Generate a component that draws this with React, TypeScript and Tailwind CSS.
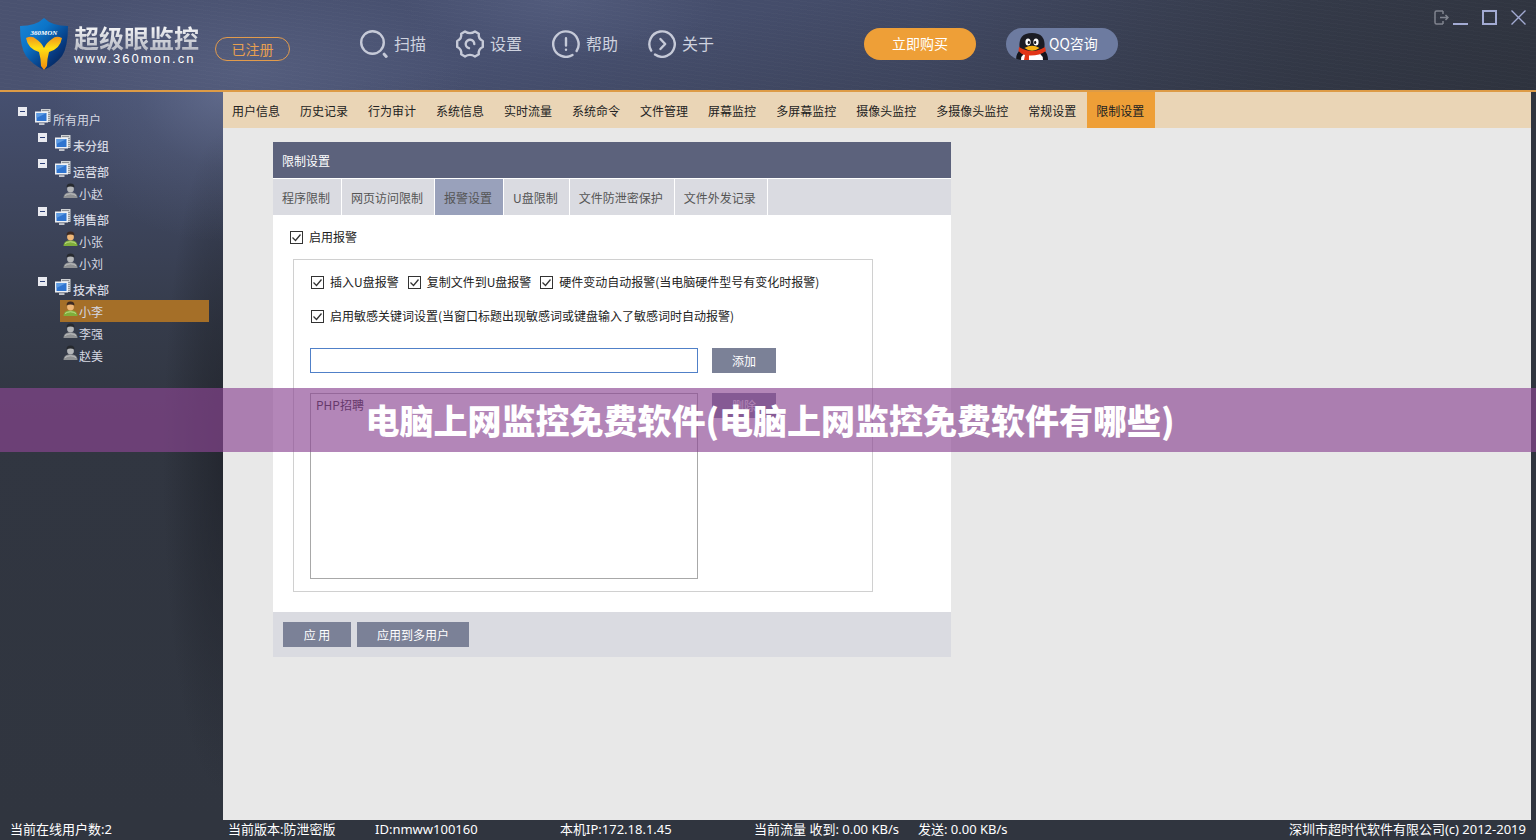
import { useState } from "react";
import type { ReactNode } from "react";
import { clsx } from "clsx";

type TreeUser = { name: string; online?: boolean };
type TreeGroup = { name: string; users: TreeUser[] };

const groups: TreeGroup[] = [
  { name: "未分组", users: [] },
  { name: "运营部", users: [{ name: "小赵" }] },
  { name: "销售部", users: [{ name: "小张", online: true }, { name: "小刘" }] },
  {
    name: "技术部",
    users: [{ name: "小李", online: true }, { name: "李强" }, { name: "赵美" }],
  },
];

const mainTabs = [
  "用户信息",
  "历史记录",
  "行为审计",
  "系统信息",
  "实时流量",
  "系统命令",
  "文件管理",
  "屏幕监控",
  "多屏幕监控",
  "摄像头监控",
  "多摄像头监控",
  "常规设置",
  "限制设置",
];

const limitTabs = [
  "程序限制",
  "网页访问限制",
  "报警设置",
  "U盘限制",
  "文件防泄密保护",
  "文件外发记录",
];

function ShieldLogo() {
  return (
    <svg viewBox="0 0 50 54" className="h-[54px] w-[50px] shrink-0" aria-hidden="true">
      <defs>
        <linearGradient id="shieldBlue" x1="0" y1="0" x2="1" y2="1">
          <stop offset="0" stopColor="#1b86d6" />
          <stop offset="0.35" stopColor="#0b74c8" />
          <stop offset="0.7" stopColor="#07397f" />
          <stop offset="1" stopColor="#05183f" />
        </linearGradient>
        <linearGradient id="shieldGold" x1="0" y1="0" x2="0" y2="1">
          <stop offset="0" stopColor="#f0951c" />
          <stop offset="0.35" stopColor="#ffdf12" />
          <stop offset="1" stopColor="#f08a10" />
        </linearGradient>
      </defs>
      <path
        d="M25 1 Q33 9 49 9 Q49 30 43 39 Q36 48 25 53 Q14 48 7 39 Q1 30 1 9 Q17 9 25 1Z"
        fill="url(#shieldBlue)"
      />
      <path
        d="M7 21 Q9 32 20 35 Q22 42 22 49 L25 53 L28 49 Q28 42 30 35 Q41 32 43 21 Q37 18 33 22 Q28 25 25 31 Q22 25 17 22 Q13 18 7 21Z"
        fill="url(#shieldGold)"
      />
      <text
        x="25"
        y="18"
        textAnchor="middle"
        fontFamily="Liberation Serif, serif"
        fontSize="7"
        fontStyle="italic"
        fontWeight="700"
        fill="#fff"
      >
        360MON
      </text>
    </svg>
  );
}

function NavIcon({ children }: { children: ReactNode }) {
  return (
    <svg
      viewBox="0 0 28 28"
      className="size-7"
      fill="none"
      stroke="#c6cad8"
      strokeWidth="2.4"
      strokeLinecap="round"
      strokeLinejoin="round"
      aria-hidden="true"
    >
      {children}
    </svg>
  );
}

const navItems = [
  {
    label: "扫描",
    icon: (
      <NavIcon>
        <circle cx="12.5" cy="12.5" r="11.3" />
        <path d="M24.2 24.2l2 2.2" strokeWidth="3" />
      </NavIcon>
    ),
  },
  {
    label: "设置",
    icon: (
      <NavIcon>
        <path d="M9 1.5 Q14 4.800 19 1.5 L22.800 3.800 Q22 8.800 26.800 11 V17 Q22 19.200 22.800 24.200 L19 26.500 Q14 23.200 9 26.500 L5.200 24.200 Q6 19.200 1.200 17 V11 Q6 8.800 5.200 3.800Z" />
        <path d="M13 18.200 A4.300 4.300 0 1 1 18.300 14" />
      </NavIcon>
    ),
  },
  {
    label: "帮助",
    icon: (
      <NavIcon>
        <path d="M20.5 25 A12.7 12.7 0 1 1 24.6 21" />
        <path d="M14 8.2v7.3M14 19.6v.2" />
      </NavIcon>
    ),
  },
  {
    label: "关于",
    icon: (
      <NavIcon>
        <path d="M3.2 20.6 A12.7 12.7 0 1 1 7 24.6" />
        <path d="M12.4 9l4.8 5-4.8 5" />
      </NavIcon>
    ),
  },
];

function PenguinIcon() {
  return (
    <svg viewBox="0 0 34 27" className="h-[27px] w-[34px]" aria-hidden="true">
      <path d="M1 27 Q1 20 6 16 L28 16 Q33 20 33 27Z" fill="#15161d" />
      <path d="M6 27 Q6 19 17 19 Q28 19 28 27Z" fill="#fff" />
      <path d="M4.5 15 Q3 0 17 0 Q31 0 29.5 15 Q24 20 17 20 Q10 20 4.5 15Z" fill="#1b1c24" />
      <path d="M4 14 Q17 22 30 14 L31 18 Q24 23 14 22.500 V27 H9 L10 22 Q6 21 3.500 18Z" fill="#e23417" />
      <ellipse cx="13" cy="9" rx="2.600" ry="3.600" fill="#fff" />
      <ellipse cx="21" cy="9" rx="2.600" ry="3.600" fill="#fff" />
      <ellipse cx="13.800" cy="9.400" rx="1.100" ry="1.600" fill="#15161d" />
      <ellipse cx="20.200" cy="9.400" rx="1.100" ry="1.600" fill="#15161d" />
      <path d="M9.500 15 Q17 10.500 24.500 15 Q17 20.500 9.500 15Z" fill="#f8b416" />
    </svg>
  );
}

function CollapseIcon() {
  return (
    <svg viewBox="0 0 9 9" className="size-[9px]" aria-hidden="true">
      <path d="M0 0h9v9H0z" fill="#e9eaf0" />
      <path d="M2 4h5v1H2z" fill="#2c3f77" />
    </svg>
  );
}

function ComputerIcon() {
  return (
    <svg viewBox="0 0 16 16" className="size-4 shrink-0" aria-hidden="true">
      <path d="M6 0h9.500v13H6z" fill="#cfd2d4" />
      <path d="M7 1.500h7" stroke="#8d9196" />
      <path d="M14 3v9" stroke="#5d6269" strokeDasharray="1 1" />
      <path d="M0 2.500h13v11H0z" fill="#eef1f5" />
      <path d="M1.500 4h10v8h-10z" fill="#2f74cf" />
      <path d="M1.500 4h10L1.500 9z" fill="#5c9ae2" />
      <path d="M4 14.300h5.500v1.500H4z" fill="#e3e5e8" />
    </svg>
  );
}

function UserIcon({ online = false }: { online?: boolean }) {
  return (
    <svg viewBox="0 0 15 16" className="h-4 w-[15px] shrink-0" aria-hidden="true">
      <path d="M0.500 15 Q0.500 10.500 5 9.500 h5 Q14.500 10.500 14.500 15Z" fill={online ? "#7fae3a" : "#8f9193"} />
      <path d="M2 12.500 Q7.500 9 13 12.500" stroke={online ? "#c3dd8c" : "#c2c3c4"} fill="none" />
      <circle cx="7.500" cy="6" r="3.400" fill={online ? "#f0b878" : "#b4b6b8"} />
      <path d="M3.600 4.500 Q3.300 0.500 7.500 0.500 Q11.700 0.500 11.400 4.500 Q7.500 2.500 3.600 4.500Z" fill={online ? "#3d2a22" : "#26292e"} />
    </svg>
  );
}

function WindowControls() {
  return (
    <div className="flex items-start gap-[14px] pt-[10px] pr-[10px] text-[#a3abd3]">
      <div className="flex gap-1">
        <button type="button" aria-label="退出登录" className="text-[#80848f]">
          <svg viewBox="0 0 15 15" className="size-[15px]" fill="none" stroke="currentColor" strokeWidth="1.500">
            <path d="M9 1H2.500Q1 1 1 2.500v10Q1 14 2.500 14H9M9 1v3M9 14v-3M6 7.500H14M11.500 5l2.500 2.500-2.500 2.500" />
          </svg>
        </button>
        <button type="button" aria-label="最小化">
          <svg viewBox="0 0 15 15" className="size-[15px]">
            <path d="M0 13h15v2H0z" fill="currentColor" />
          </svg>
        </button>
      </div>
      <button type="button" aria-label="最大化">
        <svg viewBox="0 0 15 15" className="size-[15px]" fill="none" stroke="currentColor" strokeWidth="2">
          <path d="M1 1h13v13H1z" />
        </svg>
      </button>
      <button type="button" aria-label="关闭">
        <svg viewBox="0 0 15 15" className="size-[15px]" fill="none" stroke="currentColor" strokeWidth="1.400">
          <path d="M0.500 0.500l14 14M14.500 0.500l-14 14" />
        </svg>
      </button>
    </div>
  );
}

function Header() {
  return (
    <header className="flex h-[92px] shrink-0 justify-between border-b-2 border-[#dd9b46] bg-[repeating-linear-gradient(8deg,transparent_0_3px,rgba(255,255,255,0.015)_3px_4px),radial-gradient(ellipse_220px_90px_at_250px_70px,rgba(120,130,165,0.25),transparent),radial-gradient(ellipse_160px_60px_at_560px_0px,rgba(120,130,165,0.22),transparent),linear-gradient(170deg,transparent_40%,rgba(40,44,54,0.45)),linear-gradient(90deg,#4a5270,#475070_35%,#434b67_60%,#373d4d_85%,#333844)]">
      <div className="flex items-start">
        <div className="flex pt-[17px] pl-[19px]">
          <ShieldLogo />
          <div className="w-[146px] pt-[6px] pl-[5px]">
            <p className="bg-linear-to-b from-white to-[#b4b7c2] bg-clip-text text-[25px] leading-7 font-bold text-transparent">
              超级眼监控
            </p>
            <p className="font-['Liberation_Sans',sans-serif] text-[13px] leading-4 tracking-[2px] text-white">
              www.360mon.cn
            </p>
          </div>
        </div>
        <span className="mt-[37px] flex h-6 w-[75px] items-center justify-center rounded-full border border-[#e29b4c] text-sm text-[#e8a050]">
          已注册
        </span>
        <nav className="flex gap-[30px] pt-[30px] pl-[70px]">
          {navItems.map((item) => (
            <button
              key={item.label}
              type="button"
              className="flex h-7 items-start gap-[6px] text-base leading-[26px] text-[#ced2df]"
            >
              {item.icon}
              {item.label}
            </button>
          ))}
        </nav>
        <div className="flex gap-[30px] pt-7 pl-[150px] text-sm text-white">
          <button type="button" className="h-8 w-28 rounded-full bg-[#ee9f37] pb-[2px]">
            立即购买
          </button>
          <button
            type="button"
            className="flex h-8 w-28 items-start overflow-hidden rounded-full bg-[#6d7ba0] pl-[9px] leading-[30px]"
          >
            <span className="self-end">
              <PenguinIcon />
            </span>
            QQ咨询
          </button>
        </div>
      </div>
      <WindowControls />
    </header>
  );
}

function Sidebar() {
  const [selected, setSelected] = useState("小李");

  return (
    <aside className="w-[223px] shrink-0 bg-[radial-gradient(ellipse_170px_150px_at_223px_0px,rgba(125,135,170,0.45),rgba(125,135,170,0.15)_50%,transparent),radial-gradient(ellipse_60px_330px_at_223px_370px,rgba(32,35,43,0.75),rgba(32,35,43,0.4)_50%,transparent),linear-gradient(180deg,#465070,#3f4760_13%,#353b4a_32%,#313641_45%,#30353f)] pt-3 pr-[14px] pl-[18px] text-xs text-[#d5d8e2]">
      <div className="flex h-[26px] items-start">
        <button type="button" aria-label="折叠 所有用户" className="mt-[3px] mr-2">
          <CollapseIcon />
        </button>
        <span className="mt-[5px]">
          <ComputerIcon />
        </span>
        <span className="mt-[6px] pl-[2px] leading-5">所有用户</span>
      </div>
      {groups.map((group) => (
        <div key={group.name}>
          <div className="flex h-[26px] items-start pl-5">
            <button type="button" aria-label={`折叠 ${group.name}`} className="mt-[3px] mr-2">
              <CollapseIcon />
            </button>
            <span className="mt-[5px]">
              <ComputerIcon />
            </span>
            <span className="mt-[6px] pl-[2px] leading-5 font-medium">{group.name}</span>
          </div>
          <ul className="pl-[42px]">
            {group.users.map((user) => (
              <li key={user.name}>
                <button
                  type="button"
                  onClick={() => setSelected(user.name)}
                  className={clsx(
                    "flex h-[22px] w-full items-start pt-px pl-[3px]",
                    selected === user.name && "bg-[#a56f28]",
                  )}
                >
                  <UserIcon online={user.online} />
                  <span className="pt-px pl-px leading-5">{user.name}</span>
                </button>
              </li>
            ))}
          </ul>
        </div>
      ))}
    </aside>
  );
}

function CheckField({ label }: { label: string }) {
  return (
    <label className="flex items-center gap-[6px] leading-5">
      <span className="grid">
        <input
          type="checkbox"
          defaultChecked
          className="peer col-start-1 row-start-1 size-[13px] appearance-none border border-[#333] bg-white"
        />
        <svg
          viewBox="0 0 13 13"
          className="pointer-events-none invisible col-start-1 row-start-1 size-[13px] peer-checked:visible"
          fill="none"
          stroke="#333"
          strokeWidth="1.300"
          aria-hidden="true"
        >
          <path d="M2.500 6.500l3 3 5-6" />
        </svg>
      </span>
      {label}
    </label>
  );
}

function PanelButton({ children, className }: { children: ReactNode; className: string }) {
  return (
    <button
      type="button"
      className={clsx("h-[25px] shrink-0 bg-[#7b8197] text-xs text-white", className)}
    >
      {children}
    </button>
  );
}

function LimitPanel() {
  const [activeTab, setActiveTab] = useState("报警设置");

  return (
    <section className="w-[678px] bg-white text-xs text-[#222]">
      <h2 className="flex h-9 items-center bg-[#5c627c] px-[9px] pt-px text-white">限制设置</h2>
      <div className="mt-px flex h-9 bg-[#dadbe1]">
        {limitTabs.map((tab) => (
          <button
            key={tab}
            type="button"
            onClick={() => setActiveTab(tab)}
            className={clsx(
              "border-r border-white pt-[2px] pr-[11px] pl-[9px] text-[#555]",
              tab === activeTab && "bg-[#99a1bb]",
            )}
          >
            {tab}
          </button>
        ))}
      </div>
      <div className="px-[17px] pt-3 pb-5">
        <CheckField label="启用报警" />
        <div className="mt-3 ml-[3px] h-[333px] w-[580px] border border-[#d0d0d0] px-4 pt-3">
          <div className="flex gap-[9px] pl-px">
            <CheckField label="插入U盘报警" />
            <CheckField label="复制文件到U盘报警" />
            <CheckField label="硬件变动自动报警(当电脑硬件型号有变化时报警)" />
          </div>
          <div className="mt-[14px] flex pl-px">
            <CheckField label="启用敏感关键词设置(当窗口标题出现敏感词或键盘输入了敏感词时自动报警)" />
          </div>
          <div className="mt-[22px] flex gap-[14px]">
            <input
              type="text"
              aria-label="敏感关键词"
              className="h-[25px] w-[388px] border border-[#5080c8] bg-white px-1 outline-none"
            />
            <PanelButton className="w-16">添加</PanelButton>
          </div>
          <div className="mt-5 flex gap-[14px]">
            <ul className="h-[186px] w-[388px] border border-[#a8a8a8] px-[5px] pt-px">
              <li className="leading-5">PHP招聘</li>
            </ul>
            <PanelButton className="w-16">删除</PanelButton>
          </div>
        </div>
      </div>
      <div className="flex h-[45px] gap-[6px] bg-[#dadbe1] p-[10px]">
        <PanelButton className="w-[68px]">应 用</PanelButton>
        <PanelButton className="w-28">应用到多用户</PanelButton>
      </div>
    </section>
  );
}

function StatusBar() {
  return (
    <footer className="flex h-5 shrink-0 items-start justify-between bg-[#30353f] px-[10px] font-['Noto_Sans','Noto_Sans_CJK_SC',sans-serif] text-[13px] leading-[18px] whitespace-nowrap text-white">
      <div className="flex">
        <span className="w-[218px]">当前在线用户数:2</span>
        <span className="w-[147px]">当前版本:防泄密版</span>
        <span className="w-[185px]">ID:nmww100160</span>
        <span className="w-[194px]">本机IP:172.18.1.45</span>
        <span className="w-[164px]">当前流量 收到: 0.00 KB/s</span>
        <span>发送: 0.00 KB/s</span>
      </div>
      <span>深圳市超时代软件有限公司(c) 2012-2019</span>
    </footer>
  );
}

export default function App() {
  const [activeTab, setActiveTab] = useState("限制设置");

  return (
    <div className="relative flex min-h-screen flex-col bg-[#30353f] font-['Noto_Sans_CJK_SC',sans-serif]">
      <Header />
      <div className="flex flex-1">
        <Sidebar />
        <main className="mr-[5px] min-w-0 flex-1 bg-[#e8e8e8]">
          <nav className="flex h-9 bg-[#ead5b6] text-xs text-[#222]">
            {mainTabs.map((tab) => (
              <button
                key={tab}
                type="button"
                onClick={() => setActiveTab(tab)}
                className={clsx(
                  "pt-[2px] pr-[11px] pl-[9px]",
                  tab === activeTab && "bg-[#ee9f37]",
                )}
              >
                {tab}
              </button>
            ))}
          </nav>
          <div className="pt-[14px] pl-[50px]">
            <LimitPanel />
          </div>
        </main>
      </div>
      <StatusBar />

      {/* translucent title strip across the window */}
      <div className="pointer-events-none absolute inset-x-0 top-[388px] flex h-16 items-center justify-center bg-[rgba(139,70,147,0.655)]">
        <h1 className="pl-1 text-[34px] leading-10 font-black text-white">
          电脑上网监控免费软件(电脑上网监控免费软件有哪些)
        </h1>
      </div>
    </div>
  );
}
